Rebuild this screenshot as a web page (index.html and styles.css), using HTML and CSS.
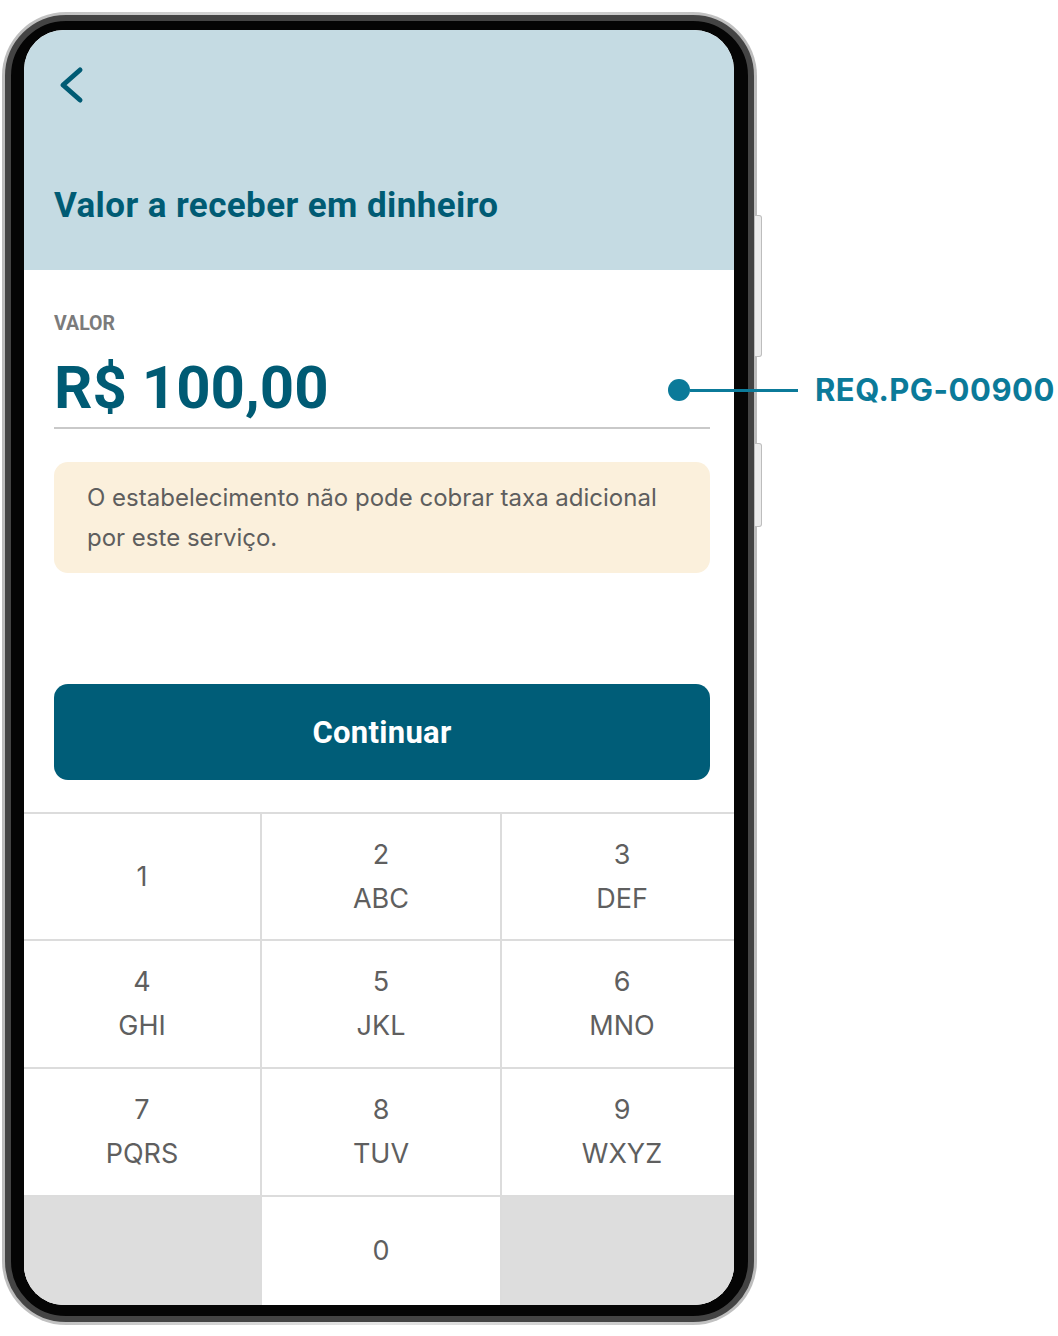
FILE: index.html
```html
<!DOCTYPE html>
<html lang="pt-BR">
<head>
  <meta charset="UTF-8" />
  <title>Valor a receber em dinheiro</title>
  <meta name="viewport" content="width=device-width, initial-scale=1.0" />
  <link rel="stylesheet" href="styles.css">
</head>
<body>

  <div class="stage">
    <div class="phone">
      <span class="side-btn side-btn-top"></span>
      <span class="side-btn side-btn-bottom"></span>
      <div class="bezel">
        <div class="screen">

          <div class="header">
            <svg class="back" width="32" height="46" viewBox="0 0 32 46">
              <polyline points="24,8 7,23 24,38" fill="none" stroke="#005b74" stroke-width="5" stroke-linecap="round" stroke-linejoin="round"/>
            </svg>
            <h1>Valor a receber em dinheiro</h1>
          </div>

          <div class="content">
            <div class="label">VALOR</div>
            <div class="amount">R$ 100,00</div>
            <div class="notice">O estabelecimento não pode cobrar taxa adicional por este serviço.</div>
            <button class="btn">Continuar</button>
          </div>

          <div class="keypad">
            <div class="key"><span>1</span></div>
            <div class="key"><span>2</span><span>ABC</span></div>
            <div class="key"><span>3</span><span>DEF</span></div>
            <div class="key"><span>4</span><span>GHI</span></div>
            <div class="key"><span>5</span><span>JKL</span></div>
            <div class="key"><span>6</span><span>MNO</span></div>
            <div class="key"><span>7</span><span>PQRS</span></div>
            <div class="key"><span>8</span><span>TUV</span></div>
            <div class="key"><span>9</span><span>WXYZ</span></div>
            <div class="key key-blank"></div>
            <div class="key"><span>0</span></div>
            <div class="key key-blank"></div>
          </div>

        </div>
      </div>
    </div>

    <div class="tag">
      <span class="tag-dot"></span>
      <span class="tag-line"></span>
      <span class="tag-text">REQ.PG-00900</span>
    </div>
  </div>

</body>
</html>
```

FILE: styles.css
```css
body {
  margin: 0;
  background: #fff;
  font-family: Inter, "Noto Sans", sans-serif;
}
.stage {
  position: relative;
  width: 1058px;
  height: 1336px;
}

/* phone frame */
.phone {
  position: relative;
  top: 12px;
  left: 2px;
  width: 755px;
  height: 1313px;
  box-sizing: border-box;
  border-radius: 64px;
  background: linear-gradient(90deg, #bcbcbc, #e4e4e4 50%, #bcbcbc);
  padding: 3px;
}
.side-btn {
  position: absolute;
  left: 753px;
  width: 6px;
  border: 1px solid #bdbdbd;
  border-left: none;
  border-radius: 0 3px 3px 0;
  background: #ececec;
}
.side-btn-top { top: 203px; height: 140px; }
.side-btn-bottom { top: 431px; height: 82px; }
.bezel {
  height: 100%;
  box-sizing: border-box;
  border-radius: 61px;
  background: #050505;
  border: 6px solid #444;
  padding: 9px 14px 11px 13px;
}
.screen {
  height: 100%;
  border-radius: 40px;
  overflow: hidden;
  background: #fff;
  display: flex;
  flex-direction: column;
}

/* header */
.header {
  height: 240px;
  flex: none;
  box-sizing: border-box;
  background: #c5dbe3;
  padding: 32px 30px 0;
}
.back {
  display: block;
  margin-left: 2px;
}
.header h1 {
  margin: 78px 0 0;
  font-family: Roboto, "Liberation Sans", sans-serif;
  font-weight: 700;
  font-size: 35px;
  letter-spacing: 0.4px;
  line-height: 40px;
  color: #005b74;
}

/* amount + notice */
.content {
  padding: 0 24px 0 30px;
}
.label {
  margin-top: 42px;
  font-family: Roboto, "Liberation Sans", sans-serif;
  font-weight: 700;
  font-size: 19.5px;
  line-height: 24px;
  color: #7b7b7b;
}
.amount {
  margin-top: 17px;
  padding-bottom: 5px;
  border-bottom: 2px solid #c9c9c9;
  font-family: Roboto, "Liberation Sans", sans-serif;
  font-weight: 700;
  font-size: 60px;
  line-height: 69px;
  color: #005b74;
}
.notice {
  margin-top: 33px;
  height: 111px;
  box-sizing: border-box;
  padding: 16px 33px 0;
  border-radius: 14px;
  background: #fbf0dc;
  font-size: 24px;
  line-height: 40px;
  color: #5e5e5e;
}
.btn {
  display: block;
  width: 100%;
  height: 96px;
  margin-top: 111px;
  border: none;
  border-radius: 14px;
  background: #005d78;
  color: #fff;
  font-family: Roboto, "Liberation Sans", sans-serif;
  font-weight: 700;
  font-size: 31px;
  letter-spacing: 0.3px;
}

/* keypad */
.keypad {
  flex: 1;
  width: 718px;
  margin-top: 32px;
  display: grid;
  grid-template-columns: 236px 238px 240px;
  grid-template-rows: 125px 126px 126px 1fr;
  gap: 2px;
  padding-top: 2px;
  background: #dcdcdc;
}
.key {
  background: #fff;
  display: flex;
  flex-direction: column;
  align-items: center;
  justify-content: center;
  font-size: 27px;
  line-height: 44px;
  color: #5f5f5f;
}
.key-blank {
  background: #dddddd;
}

/* requirement tag */
.tag {
  position: absolute;
  left: 668px;
  top: 372px;
  height: 36px;
  display: flex;
  align-items: center;
}
.tag-dot {
  width: 22px;
  height: 22px;
  border-radius: 50%;
  background: #0b7a99;
}
.tag-line {
  width: 108px;
  height: 3px;
  background: #0b7a99;
  margin-right: 17px;
}
.tag-text {
  font-weight: 700;
  font-size: 31px;
  letter-spacing: 0.5px;
  line-height: 36px;
  color: #0b7a99;
}
```
